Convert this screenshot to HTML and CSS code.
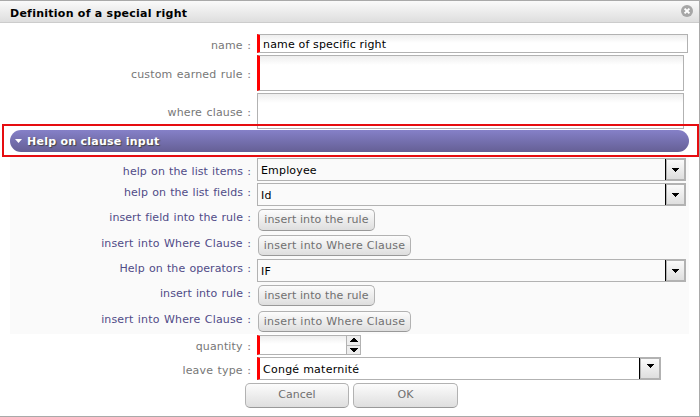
FILE: index.html
```html
<!DOCTYPE html>
<html lang="en">
<head>
<meta charset="utf-8">
<title>Definition of a special right</title>
<link rel="stylesheet" href="styles.css">
</head>
<body>
<div class="dialog">
  <header class="titlebar">
    <h1>Definition of a special right</h1>
    <svg class="close" width="12" height="12" viewBox="0 0 12 12"><circle cx="6" cy="6" r="6" fill="#a6a6a6"/><path d="M3.6 3.6l4.8 4.8M8.4 3.6l-4.8 4.8" stroke="#fff" stroke-width="2"/></svg>
  </header>
  <div class="form">
    <div class="row h21"><label class="p4">name :</label><div class="field input required">name of specific right</div></div>
    <div class="row h38"><label class="p12">custom earned rule :</label><div class="field area required"></div></div>
    <div class="row h37"><label class="p12">where clause :</label><div class="field area"></div></div>
  </div>
  <section class="help">
    <h2 class="bar"><svg width="7" height="4" viewBox="0 0 7 4"><path d="M0 0h7L3.5 4z" fill="#fff"/></svg><span>Help on clause input</span></h2>
    <div class="panel">
      <div class="row h25"><label class="p6 snug">help on the list items :</label><div class="field select"><span>Employee</span><i class="drop"><svg width="7" height="4" viewBox="0 0 7 4"><path d="M0 0h7v1H6v1H5v1H4v1H3V3H2V2H1V1H0z"/></svg></i></div></div>
      <div class="row h26"><label class="p2 snug">help on the list fields :</label><div class="field select"><span>Id</span><i class="drop"><svg width="7" height="4" viewBox="0 0 7 4"><path d="M0 0h7v1H6v1H5v1H4v1H3V3H2V2H1V1H0z"/></svg></i></div></div>
      <div class="row h26"><label class="p1 snug">insert field into the rule :</label><button class="insert rule tall">insert into the rule</button></div>
      <div class="row h24"><label class="p1">insert into Where Clause :</label><button class="insert where">insert into Where Clause</button></div>
      <div class="row h26"><label class="p2 snug">Help on the operators :</label><div class="field select"><span>IF</span><i class="drop"><svg width="7" height="4" viewBox="0 0 7 4"><path d="M0 0h7v1H6v1H5v1H4v1H3V3H2V2H1V1H0z"/></svg></i></div></div>
      <div class="row h26"><label class="p1 snug">insert into rule :</label><button class="insert rule">insert into the rule</button></div>
      <div class="row h23"><label class="p1">insert into Where Clause :</label><button class="insert where">insert into Where Clause</button></div>
    </div>
  </section>
  <div class="form tail">
    <div class="row h22"><label class="p4">quantity :</label><div class="field number required"><span></span><i class="spin"><b><svg width="8" height="4" viewBox="0 0 8 4"><path d="M3 0h2v1h1v1h1v1h1v1H0V3h1V2h1V1h1z"/></svg></b><b><svg width="8" height="4" viewBox="0 0 8 4"><path d="M0 0h8v1H7v1H6v1H5v1H3V3H2V2H1V1H0z"/></svg></b></i></div></div>
    <div class="row h26"><label class="p6">leave type :</label><div class="field select leave required"><span>Congé maternité</span><i class="drop"><svg width="7" height="4" viewBox="0 0 7 4"><path d="M0 0h7v1H6v1H5v1H4v1H3V3H2V2H1V1H0z"/></svg></i></div></div>
  </div>
  <footer class="actions"><button class="cancel">Cancel</button><button class="ok">OK</button></footer>
  <div class="highlight"></div>
</div>
</body>
</html>
```
FILE: styles.css
```css
* { box-sizing: border-box; }
body { margin: 0; background: #fff; font: 11px/14px Verdana, "DejaVu Sans", sans-serif; color: #000; }
.dialog { position: relative; width: 700px; height: 417px; overflow: hidden; border: solid #a9a9a9; border-width: 1px 1px 1px 0; background: #fff; }
.titlebar { display: flex; align-items: flex-start; justify-content: space-between; height: 22px; padding: 4px 6px 0 10px; border-bottom: 1px solid #ccc; background: linear-gradient(#fafafa, #dedede); }
h1, h2 { margin: 0; font-size: 11px; font-weight: bold; line-height: 14px; letter-spacing: .26px; }
.titlebar h1 { padding-top: 2px; }
.close { display: block; }
.form { padding-top: 11px; color: #777; }
.row { display: grid; grid-template-columns: 251px auto; column-gap: 6px; justify-content: start; align-items: start; }
.h21 { height: 21px; } .h22 { height: 22px; } .h23 { height: 23px; } .h24 { height: 24px; }
.h25 { height: 25px; } .h26 { height: 26px; } .h37 { height: 37px; } .h38 { height: 38px; }
label { text-align: right; white-space: nowrap; letter-spacing: .15px; word-spacing: .8px; }
.snug { letter-spacing: .07px; word-spacing: .6px; }
.p1 { padding-top: 2px; } .p2 { padding-top: 3px; } .p4 { padding-top: 5px; }
.p6 { padding-top: 7px; } .p12 { padding-top: 13px; }
.field { border: 1px solid #b2b2b2; color: #000; white-space: nowrap; letter-spacing: .16px; }
.required { border-left: 3px solid #f00; }
.input { width: 431px; height: 19px; padding: 3px 3px 0; background: linear-gradient(#eee, #fff 8px); }
.area { width: 427px; height: 36px; background: linear-gradient(#eee, #fff 9px); }
.select { display: flex; justify-content: space-between; width: 429px; height: 23px; }
.select span { padding: 5px 3px 0; }
.drop { display: flex; align-items: center; justify-content: center; width: 19px; padding-top: 1px; border: 1px solid #b2b2b2; box-shadow: -1px 0 #000; background: linear-gradient(#fafafa, #dedede); }
.help { height: 204px; }
.bar { display: flex; align-items: center; gap: 5px; width: 679px; height: 22px; margin-left: 10px; padding-left: 5px; border-radius: 11px; background: linear-gradient(#8580c8, #655f95); color: #fff; text-shadow: 1px 1px 1px #444; }
.bar span { padding-top: 2px; }
.panel { width: 679px; height: 177px; margin: 5px 0 0 10px; padding-top: 1px; background: #fafafa; color: #504b87; }
.panel .row { margin-left: -10px; }
button { display: block; margin: 0; padding: 0; border: 1px solid #b2b2b2; border-bottom-color: #999; border-radius: 5px; background: linear-gradient(#fcfcfc, #dedede); color: #707070; font: inherit; white-space: nowrap; }
.insert { height: 21px; margin-left: 1px; }
.tall { height: 22px; }
.rule { width: 117px; letter-spacing: .1px; }
.where { width: 153px; letter-spacing: .25px; }
.tail { padding-top: 1px; }
.number { display: flex; justify-content: space-between; width: 104px; height: 20px; background: linear-gradient(#eee, #fff 8px); }
.spin { display: flex; flex-direction: column; width: 14px; border-left: 1px solid #b2b2b2; background: #eee; }
.spin b { display: flex; flex: 1; align-items: center; justify-content: center; }
.spin b + b { border-top: 1px solid #b2b2b2; }
.leave { width: 404px; letter-spacing: .25px; }
.leave .drop { width: 20px; padding: 0 0 5px; }
.actions { display: flex; gap: 4px; padding-left: 245px; }
.actions button { height: 25px; padding-bottom: 2px; }
.cancel { width: 104px; }
.ok { width: 105px; }
.highlight { position: absolute; left: 2px; top: 123px; width: 697px; height: 33px; border: 2px solid #e60d10; }
```
